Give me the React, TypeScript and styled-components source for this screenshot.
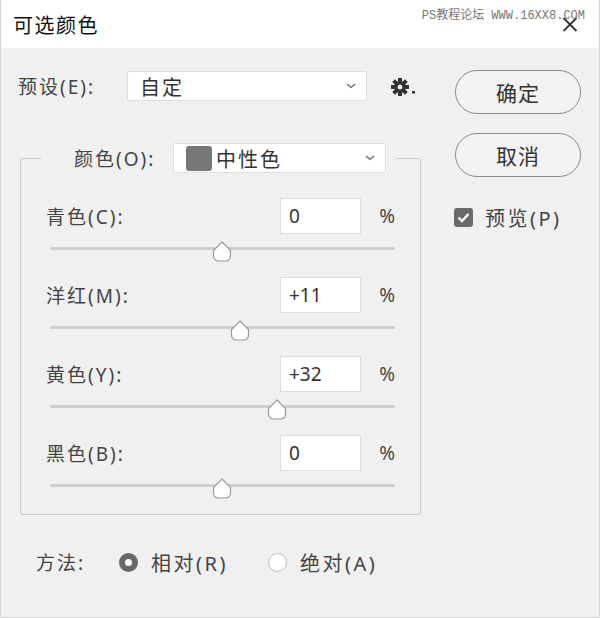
import React from 'react';
import styled, { createGlobalStyle } from 'styled-components';

const GlobalStyle = createGlobalStyle`
  html, body {
    margin: 0;
    padding: 0;
    background: #f0f0f0;
  }
  body {
    font-family: "Noto Sans", "Noto Sans CJK SC", sans-serif;
  }
`;

const Dialog = styled.div`
  position: relative;
  width: 600px;
  height: 618px;
  box-sizing: border-box;
  background: #f0f0f0;
  border: 1px solid #d8d8d8;
  border-top: none;
  color: #444;
`;

const TitleBar = styled.div`
  height: 48px;
  background: #fff;
  display: flex;
  align-items: center;
  justify-content: space-between;
  padding: 0 21px 0 12px;
`;

const Title = styled.h1`
  margin: 0;
  font-size: 20px;
  font-weight: 400;
  color: #111;
  letter-spacing: 1.5px;
`;

const Watermark = styled.span`
  position: absolute;
  top: 5px;
  right: 14px;
  font-family: "Liberation Mono", "Noto Sans CJK SC", monospace;
  font-size: 12px;
  color: #777;
`;

const Body = styled.div`
  display: grid;
  grid-template-columns: 437px 126px;
  padding-left: 17px;
`;

const LeftColumn = styled.div`
  padding-top: 23px;
`;

const RightColumn = styled.div`
  padding-top: 22px;
  display: flex;
  flex-direction: column;
`;

const PresetRow = styled.div`
  display: flex;
  align-items: center;
  height: 30px;
`;

const Label = styled.span<{ $width?: number }>`
  font-size: 19px;
  letter-spacing: 2px;
  color: #444;
  white-space: nowrap;
  ${(p) => (p.$width ? `width: ${p.$width}px; flex-shrink: 0;` : '')}
`;

const Select = styled.div<{ $width: number }>`
  box-sizing: border-box;
  width: ${(p) => p.$width}px;
  height: 30px;
  background: #fff;
  border: 1px solid #dedede;
  border-radius: 2px;
  display: flex;
  align-items: center;
  padding: 0 10px 0 12px;
  font-size: 20px;
  color: #333;
  letter-spacing: 2px;
`;

const SelectText = styled.span`
  flex: 1;
  display: flex;
  align-items: center;
  gap: 4px;
`;

const Swatch = styled.span`
  width: 26px;
  height: 25px;
  border-radius: 3px;
  background: #777;
`;

const GearButton = styled.span`
  margin-left: 24px;
  display: flex;
  align-items: center;
  margin-top: 4px;
`;

const Group = styled.fieldset`
  box-sizing: border-box;
  width: 401px;
  margin: 42px 0 0 2px;
  padding: 0;
  border: 1px solid #c9c9c9;
  border-radius: 3px;
`;

const Legend = styled.legend`
  margin-left: 20px;
  padding: 0 10px 0 33px;
  display: flex;
  align-items: center;
`;

const Rows = styled.div`
  padding: 25px 25px 0 25px;
`;

const ChannelTop = styled.div`
  display: flex;
  align-items: center;
  height: 36px;
`;

const NumberBox = styled.div`
  box-sizing: border-box;
  width: 81px;
  height: 36px;
  background: #fff;
  border: 1px solid #dcdcdc;
  padding-left: 8px;
  display: flex;
  align-items: center;
  font-size: 19px;
  color: #333;
`;

const Percent = styled.span`
  width: 34px;
  text-align: right;
  font-size: 19px;
  color: #444;
`;

const SliderZone = styled.div`
  position: relative;
  height: 43px;
  margin-left: 4px;
`;

const Track = styled.div`
  position: absolute;
  left: 0;
  right: 0;
  top: 13px;
  height: 3px;
  background: #cfcfcf;
  border-radius: 2px;
`;

const Thumb = styled.svg`
  position: absolute;
  top: 7px;
  width: 20px;
  height: 21px;
  margin-left: -11px;
`;

const MethodRow = styled.div`
  display: flex;
  align-items: center;
  height: 30px;
  margin: 32px 0 0 18px;
`;

const Radio = styled.span<{ $checked?: boolean }>`
  box-sizing: border-box;
  width: 19px;
  height: 19px;
  border-radius: 50%;
  flex-shrink: 0;
  ${(p) =>
    p.$checked
      ? 'border: 6px solid #686868; background: #fff;'
      : 'border: 1px solid #bdbdbd; background: #fff;'}
`;

const RadioText = styled.span<{ $gapAfter?: number }>`
  margin-left: 13px;
  margin-right: ${(p) => p.$gapAfter ?? 0}px;
  font-size: 20px;
  letter-spacing: 2.5px;
  color: #444;
`;

const PillButton = styled.button<{ $marginTop?: number }>`
  box-sizing: border-box;
  width: 126px;
  height: 44px;
  margin-top: ${(p) => p.$marginTop ?? 0}px;
  border: 1px solid #8c8c8c;
  border-radius: 22px;
  background: #f2f2f2;
  font-family: inherit;
  font-size: 21px;
  color: #333;
  letter-spacing: 1px;
  padding: 0;
`;

const PreviewRow = styled.label`
  display: flex;
  align-items: center;
  margin: 30px 0 0 -1px;
  height: 20px;
`;

const CheckBox = styled.span`
  width: 19px;
  height: 19px;
  border-radius: 3px;
  background: #6a6a6a;
  display: flex;
  align-items: center;
  justify-content: center;
`;

const PreviewText = styled.span`
  margin-left: 12px;
  font-size: 20px;
  letter-spacing: 2.5px;
  color: #444;
`;

function Chevron() {
  return (
    <svg width="10" height="6" viewBox="0 0 10 6">
      <path d="M1 1 L5 4.5 L9 1" fill="none" stroke="#666" strokeWidth="1.3" />
    </svg>
  );
}

function Gear() {
  const teeth = Array.from({ length: 8 }, (_, i) => i * 45);
  return (
    <svg width="28" height="20" viewBox="0 0 28 20">
      <g transform="translate(9 9)">
        {teeth.map((a) => (
          <rect key={a} x="-2" y="-9" width="4" height="5" fill="#333" transform={`rotate(${a})`} />
        ))}
        <circle r="6" fill="#333" />
        <circle r="2.4" fill="#f0f0f0" />
      </g>
      <rect x="21" y="13" width="3" height="2.5" fill="#333" />
    </svg>
  );
}

interface Channel {
  label: string;
  value: number;
}

const CHANNELS: Channel[] = [
  { label: '青色(C):', value: 0 },
  { label: '洋红(M):', value: 11 },
  { label: '黄色(Y):', value: 32 },
  { label: '黑色(B):', value: 0 },
];

function ChannelRow({ label, value }: Channel) {
  const text = value > 0 ? `+${value}` : `${value}`;
  const left = 50 + value / 2;
  return (
    <div>
      <ChannelTop>
        <Label style={{ flex: 1 }}>{label}</Label>
        <NumberBox>{text}</NumberBox>
        <Percent>%</Percent>
      </ChannelTop>
      <SliderZone>
        <Track />
        <Thumb viewBox="0 0 20 21" style={{ left: `${left}%` }}>
          <path
            d="M10 1 L18.5 9.5 L18.5 14.5 Q18.5 20 13 20 L7 20 Q1.5 20 1.5 14.5 L1.5 9.5 Z"
            fill="#fff"
            stroke="#9a9a9a"
            strokeWidth="1.2"
          />
        </Thumb>
      </SliderZone>
    </div>
  );
}

export default function App() {
  return (
    <>
      <GlobalStyle />
      <Dialog>
        <TitleBar>
          <Title>可选颜色</Title>
          <svg width="16" height="16" viewBox="0 0 16 16">
            <path d="M1.5 2 L14.5 15 M14.5 2 L1.5 15" stroke="#333" strokeWidth="1.8" fill="none" />
          </svg>
        </TitleBar>
        <Watermark>PS教程论坛 WWW.16XX8.COM</Watermark>
        <Body>
          <LeftColumn>
            <PresetRow>
              <Label $width={109}>预设(E):</Label>
              <Select $width={240}>
                <SelectText>自定</SelectText>
                <Chevron />
              </Select>
              <GearButton>
                <Gear />
              </GearButton>
            </PresetRow>

            <Group>
              <Legend>
                <Label $width={99}>颜色(O):</Label>
                <Select $width={213}>
                  <SelectText>
                    <Swatch />
                    中性色
                  </SelectText>
                  <Chevron />
                </Select>
              </Legend>
              <Rows>
                {CHANNELS.map((c) => (
                  <ChannelRow key={c.label} label={c.label} value={c.value} />
                ))}
              </Rows>
            </Group>

            <MethodRow>
              <Label $width={83}>方法:</Label>
              <Radio $checked />
              <RadioText $gapAfter={40}>相对(R)</RadioText>
              <Radio />
              <RadioText>绝对(A)</RadioText>
            </MethodRow>
          </LeftColumn>

          <RightColumn>
            <PillButton>确定</PillButton>
            <PillButton $marginTop={19}>取消</PillButton>
            <PreviewRow>
              <CheckBox>
                <svg width="13" height="11" viewBox="0 0 13 11">
                  <path d="M1.5 5.5 L5 9 L11.5 2" stroke="#fff" strokeWidth="2.4" fill="none" />
                </svg>
              </CheckBox>
              <PreviewText>预览(P)</PreviewText>
            </PreviewRow>
          </RightColumn>
        </Body>
      </Dialog>
    </>
  );
}
